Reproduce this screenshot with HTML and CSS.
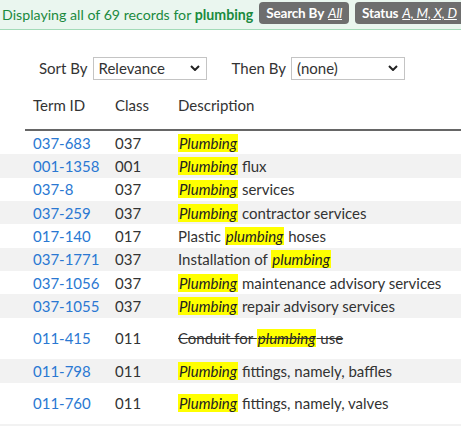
FILE: index.html
```html
<!DOCTYPE html>
<html lang="en">
<head>
<meta charset="utf-8">
<title>Search results</title>
<link rel="stylesheet" href="styles.css">
</head>
<body>
<div class="topbar">
  <span class="summary">Displaying all of 69 records for <b>plumbing</b></span>
  <span class="badge">Search By <u><i>All</i></u></span>
  <span class="badge">Status <u><i>A, M, X, D</i></u></span>
</div>

<div class="sortbar">
  <label class="sort-label">Sort By</label>
  <select class="sel"><option>Relevance</option></select>
  <label class="sort-label then">Then By</label>
  <select class="sel"><option>(none)</option></select>
</div>

<table class="results">
  <thead>
    <tr>
      <th class="gap"></th>
      <th class="c-id">Term ID</th>
      <th class="c-cls">Class</th>
      <th class="c-desc">Description</th>
    </tr>
  </thead>
  <tbody>
    <tr><td class="gap"></td><td class="c-id"><a href="#">037-683</a></td><td class="c-cls">037</td><td class="c-desc"><mark>Plumbing</mark></td></tr>
    <tr><td class="gap"></td><td class="c-id"><a href="#">001-1358</a></td><td class="c-cls">001</td><td class="c-desc"><mark>Plumbing</mark> flux</td></tr>
    <tr><td class="gap"></td><td class="c-id"><a href="#">037-8</a></td><td class="c-cls">037</td><td class="c-desc"><mark>Plumbing</mark> services</td></tr>
    <tr><td class="gap"></td><td class="c-id"><a href="#">037-259</a></td><td class="c-cls">037</td><td class="c-desc"><mark>Plumbing</mark> contractor services</td></tr>
    <tr><td class="gap"></td><td class="c-id"><a href="#">017-140</a></td><td class="c-cls">017</td><td class="c-desc">Plastic <mark>plumbing</mark> hoses</td></tr>
    <tr><td class="gap"></td><td class="c-id"><a href="#">037-1771</a></td><td class="c-cls">037</td><td class="c-desc">Installation of <mark>plumbing</mark></td></tr>
    <tr><td class="gap"></td><td class="c-id"><a href="#">037-1056</a></td><td class="c-cls">037</td><td class="c-desc"><mark>Plumbing</mark> maintenance advisory services</td></tr>
    <tr><td class="gap"></td><td class="c-id"><a href="#">037-1055</a></td><td class="c-cls">037</td><td class="c-desc"><mark>Plumbing</mark> repair advisory services</td></tr>
    <tr class="tall"><td class="gap"></td><td class="c-id"><a href="#">011-415</a></td><td class="c-cls">011</td><td class="c-desc"><s>Conduit for <mark>plumbing</mark> use</s></td></tr>
    <tr><td class="gap"></td><td class="c-id"><a href="#">011-798</a></td><td class="c-cls">011</td><td class="c-desc"><mark>Plumbing</mark> fittings, namely, baffles</td></tr>
    <tr class="tall"><td class="gap"></td><td class="c-id"><a href="#">011-760</a></td><td class="c-cls">011</td><td class="c-desc"><mark>Plumbing</mark> fittings, namely, valves</td></tr>
    <tr><td class="gap"></td><td class="c-id"></td><td class="c-cls"></td><td class="c-desc"></td></tr>
  </tbody>
</table>
</body>
</html>
```

FILE: styles.css
```css
html, body {
  margin: 0;
  padding: 0;
  background: #ffffff;
}

body {
  font-family: Lato, "Open Sans", sans-serif;
  font-size: 15px;
  color: #333333;
  overflow: hidden;
}

.topbar {
  height: 29px;
  background: #eaf6ef;
  border-bottom: 1px solid #a3dbb8;
  display: flex;
  align-items: center;
  gap: 6px;
  padding-left: 2px;
  white-space: nowrap;
}

.summary {
  color: #1a8a3e;
  font-size: 14.2px;
  margin-right: 0;
}

.summary b {
  font-weight: 700;
}

.badge {
  display: inline-flex;
  align-items: center;
  height: 22px;
  padding: 0 7px;
  margin-top: -4px;
  background: #6e6e6e;
  color: #ffffff;
  border-radius: 4px;
  font-weight: 700;
  font-size: 13.5px;
  letter-spacing: -0.2px;
}

.badge u {
  margin-left: 4px;
}

.badge i {
  font-weight: 400;
}

.sortbar {
  display: flex;
  align-items: center;
  height: 22px;
  margin-top: 27px;
  padding-left: 39px;
}

.sort-label {
  margin-right: 5px;
}

.sort-label.then {
  margin-left: 25px;
}

.sel {
  appearance: none;
  -webkit-appearance: none;
  width: 114px;
  height: 23px;
  border: 1px solid #c4c4c4;
  border-radius: 0;
  background: #ffffff url("data:image/svg+xml,%3Csvg xmlns='http://www.w3.org/2000/svg' width='10' height='6' viewBox='0 0 10 6'%3E%3Cpath d='M1 1l4 4 4-4' fill='none' stroke='%23222' stroke-width='2'/%3E%3C/svg%3E") no-repeat right 6px center;
  font-family: inherit;
  font-size: 15px;
  color: #333333;
  padding: 0 20px 0 5px;
  margin: 0;
}

.results {
  border-collapse: collapse;
  width: 100%;
  margin-top: 0;
}

.results th {
  font-weight: 400;
  text-align: left;
  height: 50px;
  padding: 16px 0 14px 8px;
  line-height: 20px;
  vertical-align: middle;
  box-sizing: border-box;
  border-bottom: 2px solid #666666;
}

.results th.gap {
  border-bottom: none;
}

.results td {
  height: 23.33px;
  padding: 0 0 0 8px;
  line-height: 20px;
  vertical-align: middle;
  white-space: nowrap;
}

.results .gap {
  width: 25px;
  padding: 0;
}

.results .c-id {
  width: 74px;
}

.results .c-cls {
  width: 55px;
}

.results tbody tr:nth-child(even) {
  background: #f2f2f2;
}

.results tr.tall td {
  height: 41.7px;
}

.results a {
  color: #2a78d2;
  text-decoration: none;
}

mark {
  background: #ffff00;
  color: #222222;
  font-style: italic;
  padding: 0 1px;
}

s {
  text-decoration: line-through;
}
```
